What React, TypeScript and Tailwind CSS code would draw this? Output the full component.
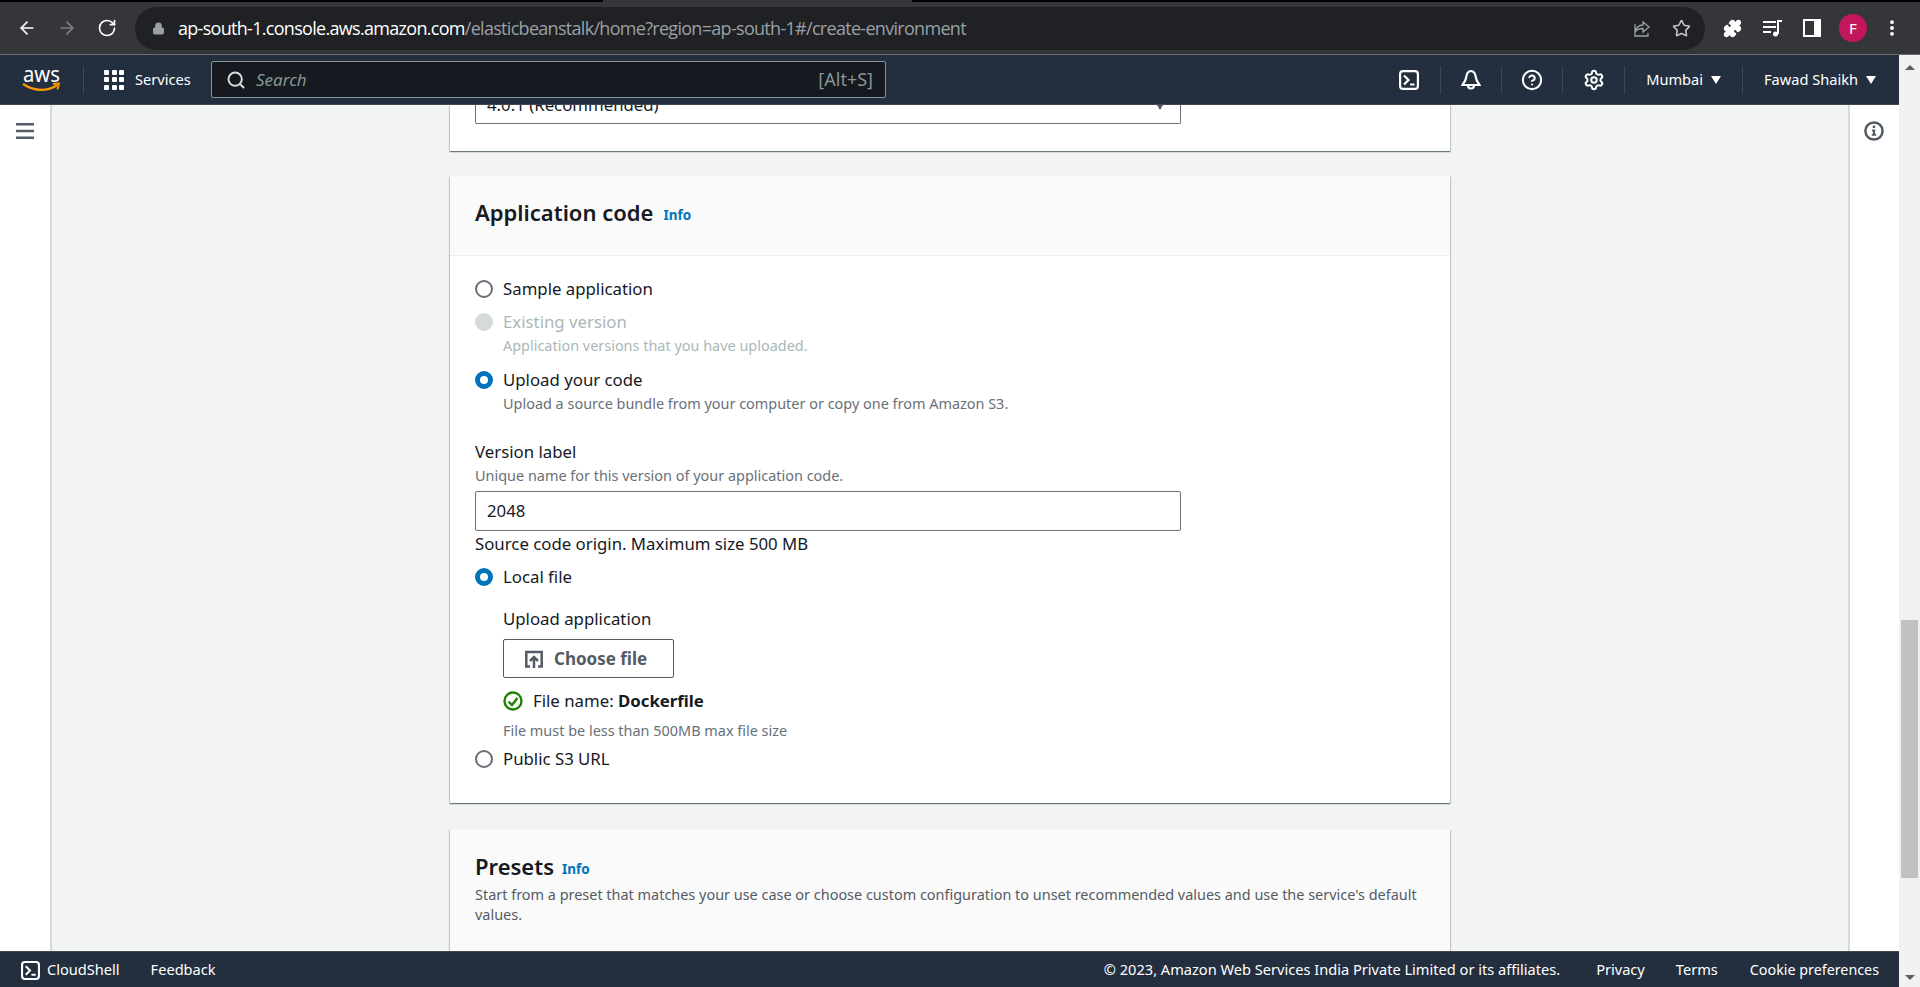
import { ArrowLeft, ArrowRight, RotateCw, Lock, Star, Puzzle, MoreVertical, Search, CircleHelp, Settings } from 'lucide-react'

function TermIcon({ size = 20 }: { size?: number }) {
  return (
    <svg width={size} height={size} viewBox="0 0 20 20" fill="none" stroke="currentColor" strokeWidth="2.2">
      <rect x="1.100" y="1.100" width="17.800" height="17.800" rx="3" />
      <path d="M5 5.500 9.500 10 5 14.500M11 14.500h4.500" />
    </svg>
  )
}

function Caret() {
  return <span className="w-0 h-0 border-x-[5px] border-x-transparent border-t-[8px] border-t-white" />
}

function Radio({ state = 'off' }: { state?: 'off' | 'on' | 'disabled' }) {
  if (state === 'on') return <span className="w-[18px] h-[18px] shrink-0 rounded-full border-[5px] border-[#0073bb] bg-white" />
  if (state === 'disabled') return <span className="w-[18px] h-[18px] shrink-0 rounded-full bg-[#d5dbdb]" />
  return <span className="w-[18px] h-[18px] shrink-0 rounded-full border-2 border-[#687078] bg-white" />
}

function RadioRow({ state, label, hint, className }: { state?: 'off' | 'on' | 'disabled'; label: string; hint?: string; className?: string }) {
  const disabled = state === 'disabled'
  return (
    <div className={className}>
      <div className="flex items-center gap-[10px] h-6">
        <Radio state={state} />
        <span className={disabled ? 'text-[#aab7b8]' : ''}>{label}</span>
      </div>
      {hint && <div className={`mt-px pl-[28px] text-[14.45px] leading-[22px] ${disabled ? 'text-[#aab7b8]' : 'text-[#687078]'}`}>{hint}</div>}
    </div>
  )
}

function InfoLink() {
  return <a className="mt-[5px] text-[13.5px] font-bold text-[#0073bb]">Info</a>
}

const navDivider = 'w-px h-7 bg-[#414750]'
const cardShadow = 'shadow-[0_1px_1px_0_rgba(0,28,36,0.4),1px_1px_1px_0_rgba(0,28,36,0.15),-1px_1px_1px_0_rgba(0,28,36,0.15)]'

export default function App() {
  return (
    <div className="h-[987px] w-[1920px] overflow-hidden flex flex-col bg-[#f2f3f3] text-[#16191f] text-[16.8px] font-['Noto_Sans',sans-serif]">
      {/* browser chrome */}
      <div className="h-[2px] bg-black shrink-0 pl-[603px]">
        <div className="w-[309px] h-full bg-[#35363a]" />
      </div>
      <div className="h-[53px] shrink-0 flex items-center bg-[#35363a] border-b border-[#6b6e72]">
        <div className="w-[135px] flex items-center pl-[17px] gap-[20px] text-white">
          <ArrowLeft size={20} />
          <ArrowRight size={20} className="text-[#7e8083]" />
          <RotateCw size={20} />
        </div>
        <div className="w-[1570px] h-[43px] rounded-full bg-[#202124] flex items-center pl-[17px] pr-[14px] text-[18px] font-['Open_Sans',sans-serif] tracking-[-0.7px]">
          <Lock size={13} className="text-[#9aa0a6] fill-[#9aa0a6] mr-[13px]" />
          <span className="text-white">ap-south-1.console.aws.amazon.com</span>
          <span className="text-[#9aa0a6]">/elasticbeanstalk/home?region=ap-south-1#/create-environment</span>
          <span className="flex-1" />
          <svg width="20" height="20" viewBox="0 0 20 20" fill="none" stroke="#9aa0a6" strokeWidth="1.300" className="mr-[20px]">
            <path d="M11 4v3c-5 .3-7 3-8 7 2-2.500 4-3.500 8-3.500V14l6-5z M3 6v12h13v-3" />
          </svg>
          <Star size={19} className="text-[#c4c7c5]" />
        </div>
        <div className="flex-1 flex items-center pl-[18px] text-white">
          <Puzzle size={19} className="fill-white" />
          <svg width="20" height="18" viewBox="0 0 20 18" fill="none" stroke="#fff" strokeWidth="2" className="ml-[21px]">
            <path d="M0 3h13M0 8h13M0 13h8M15 15V2h4" />
            <circle cx="12.500" cy="15" r="2.500" fill="#fff" stroke="none" />
          </svg>
          <svg width="18" height="18" viewBox="0 0 18 18" className="ml-[20px]">
            <path d="M0 0h18v18H0z" fill="#fff" />
            <path d="M2 2h9v14H2z" fill="#35363a" />
          </svg>
          <span className="ml-[18px] w-[28px] h-[28px] rounded-full bg-[#c2185b] text-[15px] flex items-center justify-center">F</span>
          <MoreVertical size={20} strokeWidth={2.600} className="ml-[15px]" />
        </div>
      </div>

      <div className="flex-1 min-h-0 flex">
        <div className="w-[1899px] flex flex-col min-h-0">
          {/* aws top nav */}
          <header className="h-[50px] shrink-0 bg-[#232f3e] flex items-center text-white text-[14.6px] border-b border-[#414750]">
            <div className="w-[73px] pl-[22px] flex">
              <svg width="40" height="28" viewBox="0 0 40 28">
                <text x="1" y="16" fill="#fff" fontSize="22" fontFamily="Noto Sans" textLength="37" lengthAdjust="spacingAndGlyphs">aws</text>
                <path d="M1 18Q18 29 35 19.500" stroke="#ff9900" strokeWidth="2.200" fill="none" />
                <path d="M31 18l6-.5-1.500 6" stroke="#ff9900" strokeWidth="1.800" fill="none" />
              </svg>
            </div>
            <div className="w-[21px] flex justify-center"><span className={navDivider} /></div>
            <div className="ml-[10px] grid grid-cols-3 gap-[2.500px] w-[20px]">
              {Array.from({ length: 9 }).map((_, i) => (
                <span key={i} className="w-[5px] h-[5px] rounded-[1px] bg-white" />
              ))}
            </div>
            <span className="ml-[11px] w-[76px]">Services</span>
            <div className="w-[675px] h-[37px] rounded-[2px] border border-[#879596] bg-[#16191f] flex items-center pl-[14px] pr-[12px] text-[#879596]">
              <Search size={20} strokeWidth={2.400} className="text-[#d5dbdb]" />
              <span className="ml-[10px] flex-1 italic text-[17px]">Search</span>
              <span className="text-[18px]">[Alt+S]</span>
            </div>
            <div className="flex-1" />
            <div className="flex items-center">
              <TermIcon size={20} />
              <span className={`ml-[21px] ${navDivider}`} />
              <svg width="20" height="22" viewBox="0 0 20 22" fill="none" stroke="#fff" strokeWidth="2.200" className="ml-[20px]">
                <path d="M10 2C6.500 2 5.500 5 5 9c-.3 2.500-1.500 4-3.500 7h17c-2-3-3.200-4.500-3.500-7C14.500 5 13.500 2 10 2z" />
                <path d="M7 16.500a3 3 0 0 0 6 0" />
              </svg>
              <span className={`ml-[20px] ${navDivider}`} />
              <CircleHelp size={22} strokeWidth={2.200} className="ml-[19px]" />
              <span className={`ml-[19px] ${navDivider}`} />
              <Settings size={22} strokeWidth={2.200} className="ml-[20px]" />
              <span className={`ml-[19px] ${navDivider}`} />
              <span className="ml-[21px]">Mumbai</span>
              <span className="ml-[8px] flex"><Caret /></span>
              <span className={`ml-[21px] ${navDivider}`} />
              <span className="ml-[21px]">Fawad Shaikh</span>
              <span className="ml-[8px] flex"><Caret /></span>
              <span className="w-[23px]" />
            </div>
          </header>

          {/* console body */}
          <div className="flex-1 min-h-0 flex overflow-hidden">
            <aside className="w-[52px] shrink-0 bg-white border-r-2 border-[#d5dbdb] pt-[18px] pl-[16px]">
              <svg width="18" height="16" viewBox="0 0 18 16" fill="#545b64">
                <path d="M0 0h18v2.400H0zM0 6.800h18v2.400H0zM0 13.600h18V16H0z" />
              </svg>
            </aside>

            <main className="flex-1 min-w-0 overflow-hidden pl-[398px]">
              <div className="w-[1000px]">
                {/* clipped version card */}
                <section className={`h-[46px] bg-white px-[25px] ${cardShadow}`}>
                  <div className="h-[19px] w-[706px] rounded-b-[2px] border border-t-0 border-[#687078] relative overflow-hidden px-[11px]">
                    <div className="-mt-[12px] leading-[24px]">4.0.1 (Recommended)</div>
                    <span className="absolute right-[17px] top-0 w-0 h-0 border-x-[3px] border-x-transparent border-t-[5px] border-t-[#545b64]" />
                  </div>
                </section>

                {/* application code card */}
                <section className={`mt-[25px] h-[627px] bg-white ${cardShadow}`}>
                  <div className="h-[80px] bg-[#fafafa] border-b border-[#eaeded] pl-[25px] pb-[6px] flex items-center gap-[10px]">
                    <h2 className="text-[22px] font-semibold">Application code</h2>
                    <InfoLink />
                  </div>
                  <div className="pl-[25px] pt-[21px]">
                    <RadioRow label="Sample application" />
                    <RadioRow state="disabled" label="Existing version" hint="Application versions that you have uploaded." className="mt-[9px]" />
                    <RadioRow state="on" label="Upload your code" hint="Upload a source bundle from your computer or copy one from Amazon S3." className="mt-[11px]" />

                    <div className="mt-[25px] leading-6">Version label</div>
                    <div className="mt-px text-[14.45px] leading-[22px] text-[#687078]">Unique name for this version of your application code.</div>
                    <div className="mt-[4px] w-[706px] h-[40px] border border-[#687078] rounded-[2px] px-[11px] flex items-center">2048</div>
                    <div className="mt-px leading-6">Source code origin. Maximum size 500 MB</div>
                    <RadioRow state="on" label="Local file" className="mt-[9px]" />
                    <div className="pl-[28px]">
                      <div className="mt-[18px] leading-6">Upload application</div>
                      <div className="mt-[8px] w-[171px] h-[39px] border border-[#545b64] rounded-[2px] flex items-center pl-[21px] text-[#545b64] text-[17px] font-bold">
                        <svg width="18" height="18" viewBox="0 0 18 18" fill="none" stroke="#545b64" strokeWidth="2.500">
                          <path d="M5 16.500H1.300V2h15.400v14.500H13M9 18V7M5 11l4-4 4 4" />
                        </svg>
                        <span className="ml-[11px]">Choose file</span>
                      </div>
                      <div className="mt-[11px] flex items-center leading-6">
                        <svg width="20" height="20" viewBox="0 0 20 20" fill="none" stroke="#1d8102" strokeWidth="2.400">
                          <circle cx="10" cy="10" r="8.500" />
                          <path d="M5.500 10.500 9 14l5.500-7" />
                        </svg>
                        <span className="ml-[10px]">File name: <b>Dockerfile</b></span>
                      </div>
                      <div className="mt-[7px] text-[14.45px] leading-[22px] text-[#687078]">File must be less than 500MB max file size</div>
                    </div>
                    <RadioRow label="Public S3 URL" className="mt-[5px]" />
                  </div>
                </section>

                {/* presets card */}
                <section className={`mt-[26px] h-[200px] bg-[#fafafa] ${cardShadow}`}>
                  <div className="pl-[25px] pr-[25px] pt-[21px]">
                    <div className="flex items-center gap-[8px]">
                      <h2 className="text-[22px] font-semibold">Presets</h2>
                      <InfoLink />
                    </div>
                    <p className="mt-[2px] text-[14.45px] leading-[20px] text-[#545b64]">
                      Start from a preset that matches your use case or choose custom configuration to unset recommended values and use the service's default values.
                    </p>
                  </div>
                </section>
              </div>
            </main>

            <aside className="w-[51px] shrink-0 bg-white border-l-2 border-[#d5dbdb] pt-[16px] pl-[14px]">
              <svg width="20" height="20" viewBox="0 0 20 20">
                <circle cx="10" cy="10" r="8.600" fill="none" stroke="#545b64" strokeWidth="2.500" />
                <path d="M8.800 4.500h2.400v2.400H8.800zM8 8.500h3.200v4.500h1v1.800H7.800V13h1v-2.800H8z" fill="#545b64" />
              </svg>
            </aside>
          </div>

          {/* footer */}
          <footer className="h-[36px] shrink-0 bg-[#232f3e] border-t border-[#414750] pt-px flex items-center text-white text-[14.6px]">
            <span className="ml-[21px] flex"><TermIcon size={19} /></span>
            <span className="ml-[7px]">CloudShell</span>
            <span className="ml-[31px]">Feedback</span>
            <span className="flex-1" />
            <span>© 2023, Amazon Web Services India Private Limited or its affiliates.</span>
            <span className="ml-[36px]">Privacy</span>
            <span className="ml-[31px]">Terms</span>
            <span className="ml-[32px] mr-[20px] text-[14.3px]">Cookie preferences</span>
          </footer>
        </div>

        {/* page scrollbar */}
        <div className="w-[21px] shrink-0 bg-[#f1f1f1] flex flex-col items-center pt-[10px] pb-[7px]">
          <span className="w-0 h-0 border-x-[5px] border-x-transparent border-b-[5px] border-b-[#5f5f5f]" />
          <span className="mt-[550px] w-[17px] h-[258px] bg-[#c1c1c1]" />
          <span className="flex-1" />
          <span className="w-0 h-0 border-x-[5px] border-x-transparent border-t-[5px] border-t-[#5f5f5f]" />
        </div>
      </div>
    </div>
  )
}
